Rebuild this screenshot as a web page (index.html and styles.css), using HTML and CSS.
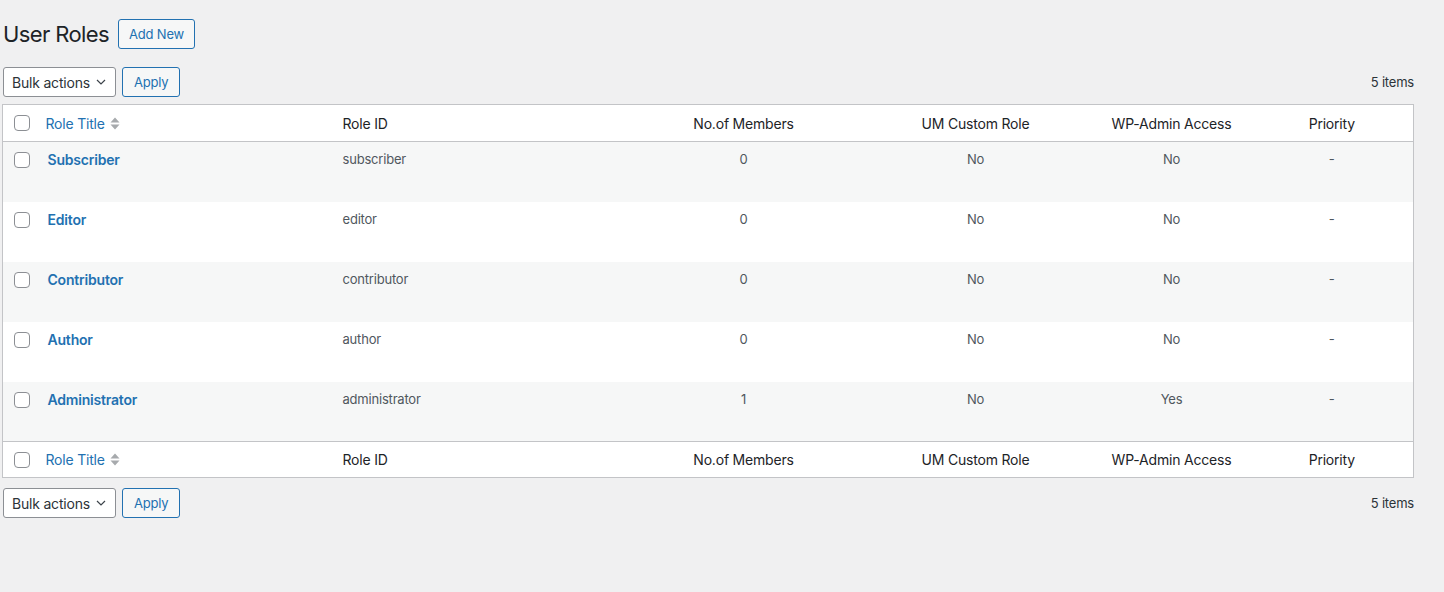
FILE: index.html
```html
<!DOCTYPE html>
<html lang="en">
<head>
    <meta charset="UTF-8">
    <title>User Roles</title>
    <link rel="stylesheet" href="styles.css">
</head>
<body>
    <div class="wrap">
        <div class="page-head">
            <h1>User Roles</h1>
            <a class="btn" href="#">Add New</a>
        </div>

        <div class="tablenav top">
            <div class="select">Bulk actions
                <svg class="chev" width="10" height="6" viewBox="0 0 10 6"><path d="M1 1l4 4 4-4" fill="none" stroke="#3c434a" stroke-width="1.2"/></svg>
            </div>
            <a class="btn apply" href="#">Apply</a>
            <span class="count">5 items</span>
        </div>

        <table class="list">
            <colgroup>
                <col class="c-cb">
                <col class="c-title">
                <col class="c-id">
                <col class="c-members">
                <col class="c-custom">
                <col class="c-access">
                <col class="c-priority">
            </colgroup>
            <thead>
                <tr>
                    <th class="cb"><span class="box"></span></th>
                    <th class="left"><a href="#" class="sort">Role Title
                        <svg width="10" height="13" viewBox="0 0 10 13"><path d="M0.5 5.5L5 0.5l4.5 5z M0.5 7.5L5 12.5l4.5-5z" fill="#a7aaad"/></svg></a></th>
                    <th class="left">Role ID</th>
                    <th>No.of Members</th>
                    <th>UM Custom Role</th>
                    <th>WP-Admin Access</th>
                    <th>Priority</th>
                </tr>
            </thead>
            <tbody>
                <tr>
                    <td class="cb"><span class="box"></span></td>
                    <td class="left"><a href="#" class="name">Subscriber</a></td>
                    <td class="left">subscriber</td>
                    <td>0</td><td>No</td><td>No</td><td>-</td>
                </tr>
                <tr>
                    <td class="cb"><span class="box"></span></td>
                    <td class="left"><a href="#" class="name">Editor</a></td>
                    <td class="left">editor</td>
                    <td>0</td><td>No</td><td>No</td><td>-</td>
                </tr>
                <tr>
                    <td class="cb"><span class="box"></span></td>
                    <td class="left"><a href="#" class="name">Contributor</a></td>
                    <td class="left">contributor</td>
                    <td>0</td><td>No</td><td>No</td><td>-</td>
                </tr>
                <tr>
                    <td class="cb"><span class="box"></span></td>
                    <td class="left"><a href="#" class="name">Author</a></td>
                    <td class="left">author</td>
                    <td>0</td><td>No</td><td>No</td><td>-</td>
                </tr>
                <tr>
                    <td class="cb"><span class="box"></span></td>
                    <td class="left"><a href="#" class="name">Administrator</a></td>
                    <td class="left">administrator</td>
                    <td>1</td><td>No</td><td>Yes</td><td>-</td>
                </tr>
            </tbody>
            <tfoot>
                <tr>
                    <th class="cb"><span class="box"></span></th>
                    <th class="left"><a href="#" class="sort">Role Title
                        <svg width="10" height="13" viewBox="0 0 10 13"><path d="M0.5 5.5L5 0.5l4.5 5z M0.5 7.5L5 12.5l4.5-5z" fill="#a7aaad"/></svg></a></th>
                    <th class="left">Role ID</th>
                    <th>No.of Members</th>
                    <th>UM Custom Role</th>
                    <th>WP-Admin Access</th>
                    <th>Priority</th>
                </tr>
            </tfoot>
        </table>

        <div class="tablenav bottom">
            <div class="select">Bulk actions
                <svg class="chev" width="10" height="6" viewBox="0 0 10 6"><path d="M1 1l4 4 4-4" fill="none" stroke="#3c434a" stroke-width="1.2"/></svg>
            </div>
            <a class="btn apply" href="#">Apply</a>
            <span class="count">5 items</span>
        </div>
    </div>
</body>
</html>
```

FILE: styles.css
```css
body {
    margin: 0;
    background: #f0f0f1;
    color: #3c434a;
    font-family: Inter, Roboto, "Noto Sans", sans-serif;
    font-size: 13px;
    letter-spacing: -0.2px;
}
.wrap {
    margin: 19px 30px 0 2px;
}
.page-head {
    display: flex;
    align-items: center;
    gap: 9px;
    height: 30px;
}
h1 {
    margin: 0 0 0 1px;
    font-size: 22px;
    font-weight: 400;
    color: #1d2327;
    letter-spacing: -0.6px;
}
.btn {
    display: inline-flex;
    align-items: center;
    box-sizing: border-box;
    height: 30px;
    padding: 0 10px;
    border: 1px solid #2271b1;
    border-radius: 3px;
    background: #f6f7f7;
    color: #2271b1;
    text-decoration: none;
    font-size: 13px;
}
.tablenav {
    display: flex;
    align-items: center;
    gap: 6px;
    height: 30px;
}
.tablenav.top {
    margin: 18px 0 7px 1px;
}
.tablenav.bottom {
    margin: 10px 0 0 1px;
}
.select {
    display: flex;
    align-items: center;
    justify-content: space-between;
    box-sizing: border-box;
    width: 113px;
    height: 30px;
    padding: 0 9px 0 8px;
    border: 1px solid #8c8f94;
    border-radius: 3px;
    background: #fff;
    color: #2c3338;
    font-size: 14px;
}
.apply {
    padding: 0 11px;
}
.count {
    margin-left: auto;
    color: #2c3338;
}
.list {
    width: 100%;
    border-collapse: collapse;
    table-layout: fixed;
    background: #fff;
    border: 1px solid #c3c4c7;
}
.c-cb { width: 33px; }
.c-title { width: 297px; }
.c-id { width: 296px; }
.c-members { width: 230px; }
.c-custom { width: 234px; }
.c-access { width: 158px; }
.c-priority { width: auto; }
th, td {
    padding: 0 10px;
    text-align: center;
}
th {
    height: 36px;
    font-size: 14px;
    font-weight: 400;
    color: #1d2327;
}
thead tr {
    border-bottom: 1px solid #c3c4c7;
}
tfoot tr {
    border-top: 1px solid #c3c4c7;
}
tfoot th {
    height: 35px;
}
td {
    height: 60px;
    padding-top: 7px;
    padding-bottom: 8px;
    box-sizing: border-box;
    vertical-align: top;
    line-height: 20px;
    color: #50575e;
}
tbody tr:nth-child(odd) {
    background: #f6f7f7;
}
.left {
    text-align: left;
}
.cb {
    padding: 0 0 0 11px;
    text-align: left;
}
td.cb {
    padding-top: 10px;
}
.box {
    display: block;
    box-sizing: border-box;
    width: 16px;
    height: 16px;
    border: 1px solid #8c8f94;
    border-radius: 4px;
    background: #fff;
}
.sort {
    display: inline-flex;
    align-items: center;
    gap: 5px;
    color: #2271b1;
    text-decoration: none;
}
.name {
    display: inline-block;
    margin-top: 1px;
    color: #2271b1;
    font-weight: 600;
    font-size: 14px;
    text-decoration: none;
    padding-left: 2px;
}
```
